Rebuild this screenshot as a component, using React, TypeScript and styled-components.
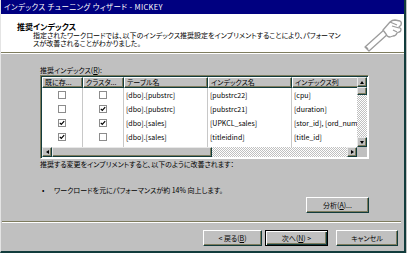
import styled, { createGlobalStyle } from "styled-components";

const FACE = "#c0c0c0";
const SHADE = "#7e7c5e";
const DARK = "#123c3c";

const GlobalStyle = createGlobalStyle`
  html, body {
    margin: 0;
    padding: 0;
    background: ${FACE};
  }
  body {
    font-family: "Noto Sans CJK JP", "Noto Sans", sans-serif;
  }
`;

const Window = styled.div`
  width: 406px;
  height: 253px;
  box-sizing: border-box;
  background: ${FACE};
  border-left: 1px solid #e4e4e4;
  border-right: 2px solid ${DARK};
  border-bottom: 2px solid ${DARK};
  display: flex;
  flex-direction: column;
  overflow: hidden;
  color: #000;
  font-size: 7px;
  font-feature-settings: "palt";
`;

const TitleBar = styled.div`
  height: 14px;
  background: #000080;
  color: #fff;
  font-size: 7.5px;
  letter-spacing: 0.35px;
  line-height: 14px;
  padding-left: 3px;
  white-space: nowrap;
`;

const Header = styled.div`
  height: 38px;
  background: #fff;
  display: flex;
  justify-content: space-between;
  align-items: flex-start;
`;

const HeaderText = styled.div`
  padding: 8px 0 0 16px;
`;

const HeaderTitle = styled.div`
  font-size: 8px;
  font-weight: 700;
  line-height: 9px;
`;

const HeaderDesc = styled.div`
  padding-left: 16px;
  line-height: 8px;
  white-space: nowrap;
`;

const WizardIcon = styled.svg`
  margin: 4px 1px 0 0;
  flex: none;
`;

const Rule = styled.div<{ $inset?: boolean }>`
  height: 0;
  border-top: 1px solid ${SHADE};
  border-bottom: 1px solid #fff;
  margin: ${(p) => (p.$inset ? "8px 3px 0 1px" : "0")};
`;

const Body = styled.div`
  padding: 12px 35px 0 39px;
  display: flex;
  flex-direction: column;
`;

const Label = styled.div`
  line-height: 9px;
  white-space: nowrap;
`;

const ListView = styled.div`
  width: 329px;
  height: 84px;
  box-sizing: border-box;
  border: 1px solid;
  border-color: ${SHADE} #fff #fff ${SHADE};
  box-shadow: inset 1px 1px ${DARK};
  padding: 1px 0 0 1px;
  display: grid;
  grid-template-columns: 315px 10px;
  grid-template-rows: 70px 10px;
  background: #fff;
`;

const Viewport = styled.div`
  overflow: hidden;
  background: #fff;
`;

const COLS = "41px 41px 84px 84px 90px";

const HeadRow = styled.div`
  display: grid;
  grid-template-columns: ${COLS};
  height: 11px;
`;

const HeadCell = styled.div`
  box-sizing: border-box;
  background: ${FACE};
  border-top: 1px solid #fff;
  border-left: 1px solid #fff;
  border-right: 1px solid ${DARK};
  border-bottom: 1px solid ${DARK};
  box-shadow: inset -1px -1px ${SHADE};
  line-height: 9px;
  padding-left: 2px;
  white-space: nowrap;
  overflow: hidden;
`;

const Row = styled.div`
  display: grid;
  grid-template-columns: ${COLS};
  height: 14px;
`;

const Cell = styled.div<{ $center?: boolean }>`
  box-sizing: border-box;
  border-right: 1px solid #c8c8c8;
  display: flex;
  align-items: center;
  justify-content: ${(p) => (p.$center ? "center" : "flex-start")};
  padding-left: ${(p) => (p.$center ? "0" : "2px")};
  white-space: nowrap;
  overflow: hidden;
`;

const CheckBox = styled.span`
  width: 8px;
  height: 8px;
  box-sizing: border-box;
  border: 1px solid #8c8c8c;
  background: #fff;
  display: inline-flex;
`;

const ScrollV = styled.div`
  display: flex;
  flex-direction: column;
`;

const ScrollH = styled.div`
  display: flex;
`;

const ScrollBtn = styled.div`
  width: 10px;
  height: 10px;
  flex: none;
  box-sizing: border-box;
  background: ${FACE};
  border: 1px solid;
  border-color: #e8e8e8 ${DARK} ${DARK} #e8e8e8;
  box-shadow: inset -1px -1px ${SHADE};
  display: flex;
  align-items: center;
  justify-content: center;
`;

const Thumb = styled(ScrollBtn)<{ $len: number; $vertical?: boolean }>`
  width: ${(p) => (p.$vertical ? "10px" : `${p.$len}px`)};
  height: ${(p) => (p.$vertical ? `${p.$len}px` : "10px")};
`;

const Track = styled.div`
  flex: 1;
  background: repeating-conic-gradient(${FACE} 0% 25%, #fff 0% 50%) 0 0 / 2px 2px;
`;

const Corner = styled.div`
  background: ${FACE};
`;

const Arrow = styled.span<{ $dir: "up" | "down" | "left" | "right" }>`
  width: 0;
  height: 0;
  border: 2.5px solid transparent;
  ${(p) =>
    p.$dir === "up"
      ? "border-bottom: 3px solid #000; border-top-width: 0;"
      : p.$dir === "down"
      ? "border-top: 3px solid #000; border-bottom-width: 0;"
      : p.$dir === "left"
      ? "border-right: 3px solid #000; border-left-width: 0;"
      : "border-left: 3px solid #000; border-right-width: 0;"}
`;

const Summary = styled.div`
  margin-top: 1px;
  line-height: 9px;
  white-space: nowrap;
`;

const Bullet = styled.div`
  margin-top: 17px;
  line-height: 9px;
  display: flex;
  white-space: nowrap;
`;

const Dot = styled.span`
  width: 14px;
  padding-left: 2px;
  box-sizing: border-box;
`;

const ButtonRow = styled.div<{ $top?: number }>`
  display: flex;
  justify-content: flex-end;
  align-items: center;
  margin-top: ${(p) => p.$top ?? 0}px;
`;

const Button = styled.div<{ $w: number; $default?: boolean; $left?: number }>`
  width: ${(p) => p.$w}px;
  height: 16px;
  margin-left: ${(p) => p.$left ?? 0}px;
  box-sizing: border-box;
  background: ${FACE};
  border: 1px solid;
  border-color: ${(p) => (p.$default ? "#000" : `#fff ${DARK} ${DARK} #fff`)};
  box-shadow: ${(p) =>
    p.$default
      ? `inset 1px 1px #fff, inset -1px -1px ${DARK}, inset -2px -2px ${SHADE}`
      : `inset -1px -1px ${SHADE}`};
  display: flex;
  align-items: center;
  justify-content: center;
  white-space: nowrap;
`;

const Footer = styled.div`
  margin-top: 7px;
  padding-right: 6px;
`;

function Check({ on }: { on: boolean }) {
  return (
    <CheckBox>
      {on && (
        <svg width="6" height="6" viewBox="0 0 6 6">
          <polyline points="0.8,2.8 2.3,4.4 5.2,1.2" fill="none" stroke="#000" strokeWidth="1.2" />
        </svg>
      )}
    </CheckBox>
  );
}

const rows = [
  { exists: false, cluster: false, table: "[dbo].[pubstrc]", name: "[pubstrc22]", cols: "[cpu]" },
  { exists: false, cluster: true, table: "[dbo].[pubstrc]", name: "[pubstrc21]", cols: "[duration]" },
  { exists: true, cluster: true, table: "[dbo].[sales]", name: "[UPKCL_sales]", cols: "[stor_id], [ord_num]" },
  { exists: true, cluster: false, table: "[dbo].[sales]", name: "[titleidind]", cols: "[title_id]" },
  { exists: false, cluster: false, table: "[dbo].[titles]", name: "[titleind]", cols: "[title]" },
];

export default function App() {
  return (
    <>
      <GlobalStyle />
      <Window>
        <TitleBar>インデックス チューニング ウィザード - MICKEY</TitleBar>
        <Header>
          <HeaderText>
            <HeaderTitle>推奨インデックス</HeaderTitle>
            <HeaderDesc>
              指定されたワークロードでは、以下のインデックス推奨設定をインプリメントすることにより、パフォーマン
              <br />
              スが改善されることがわかりました。
            </HeaderDesc>
          </HeaderText>
          <WizardIcon width="40" height="34" viewBox="0 0 40 34">
            <g fill="#fff" stroke="#9c9c9c" strokeWidth="1.3" strokeLinejoin="round">
              <polygon points="2,29 6,33 26,15 22,11" />
              <path d="M20 12 L27 4 Q29 2 32 2 L37 3 Q39 4 38 7 L36 9 L38 11 Q38 14 36 14 L34 15 Q33 18 30 18 L27 19 Q24 19 23 16 Z" />
              <path d="M27 4 L34 7 M29 8 L36 10 M30 12 L34 14" fill="none" />
              <path d="M5 31 L3 29" fill="none" />
            </g>
          </WizardIcon>
        </Header>
        <Rule />
        <Body>
          <Label>
            推奨インデックス(<u>R</u>):
          </Label>
          <ListView>
            <Viewport>
              <HeadRow>
                <HeadCell>既に存...</HeadCell>
                <HeadCell>クラスタ...</HeadCell>
                <HeadCell>テーブル名</HeadCell>
                <HeadCell>インデックス名</HeadCell>
                <HeadCell>インデックス列</HeadCell>
              </HeadRow>
              {rows.map((r, i) => (
                <Row key={i}>
                  <Cell $center>
                    <Check on={r.exists} />
                  </Cell>
                  <Cell $center>
                    <Check on={r.cluster} />
                  </Cell>
                  <Cell>{r.table}</Cell>
                  <Cell>{r.name}</Cell>
                  <Cell>{r.cols}</Cell>
                </Row>
              ))}
            </Viewport>
            <ScrollV>
              <ScrollBtn>
                <Arrow $dir="up" />
              </ScrollBtn>
              <Thumb $len={8} $vertical />
              <Track />
              <ScrollBtn>
                <Arrow $dir="down" />
              </ScrollBtn>
            </ScrollV>
            <ScrollH>
              <ScrollBtn>
                <Arrow $dir="left" />
              </ScrollBtn>
              <Thumb $len={160} />
              <Track />
              <ScrollBtn>
                <Arrow $dir="right" />
              </ScrollBtn>
            </ScrollH>
            <Corner />
          </ListView>
          <Summary>推奨する変更をインプリメントすると、以下のように改善されます：</Summary>
          <Bullet>
            <Dot>•</Dot>
            ワークロードを元にパフォーマンスが約 14% 向上します。
          </Bullet>
          <ButtonRow $top={2}>
            <Button $w={63}>
              分析(<u>A</u>)...
            </Button>
          </ButtonRow>
        </Body>
        <Rule $inset />
        <Footer>
          <ButtonRow>
            <Button $w={59}>
              &lt; 戻る(<u>B</u>)
            </Button>
            <Button $w={63} $default $left={3}>
              次へ(<u>N</u>) &gt;
            </Button>
            <Button $w={62} $left={8}>
              キャンセル
            </Button>
          </ButtonRow>
        </Footer>
      </Window>
    </>
  );
}
